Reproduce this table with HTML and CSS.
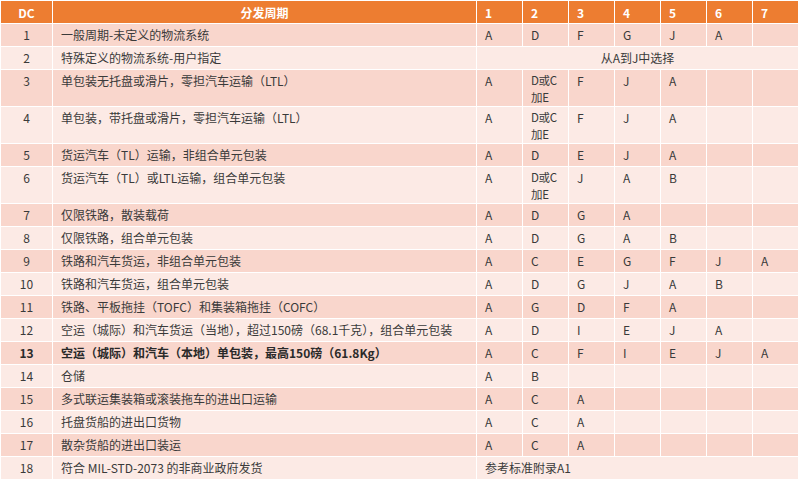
FILE: index.html
```html
<!DOCTYPE html>
<html lang="zh-CN">
<head>
<meta charset="utf-8">
<link rel="stylesheet" href="styles.css">
</head>
<body>
<table class="grid">
  <colgroup>
    <col class="c-dc"><col class="c-desc">
    <col class="c-n"><col class="c-n"><col class="c-n"><col class="c-n"><col class="c-n"><col class="c-n"><col class="c-n">
  </colgroup>
  <thead>
    <tr class="head">
      <th class="ctr">DC</th><th class="ctr">分发周期</th>
      <th>1</th><th>2</th><th>3</th><th>4</th><th>5</th><th>6</th><th>7</th>
    </tr>
  </thead>
  <tbody>
    <tr class="dark"><td class="ctr">1</td><td>一般周期-未定义的物流系统</td><td>A</td><td>D</td><td>F</td><td>G</td><td>J</td><td>A</td><td></td></tr>
    <tr class="light"><td class="ctr">2</td><td>特殊定义的物流系统-用户指定</td><td colspan="7" class="ctr">从A到J中选择</td></tr>
    <tr class="dark tall"><td class="ctr">3</td><td>单包装无托盘或滑片，零担汽车运输（LTL）</td><td>A</td><td class="narrow">D或C<br>加E</td><td>F</td><td>J</td><td>A</td><td></td><td></td></tr>
    <tr class="light tall"><td class="ctr">4</td><td>单包装，带托盘或滑片，零担汽车运输（LTL）</td><td>A</td><td class="narrow">D或C<br>加E</td><td>F</td><td>J</td><td>A</td><td></td><td></td></tr>
    <tr class="dark"><td class="ctr">5</td><td>货运汽车（TL）运输，非组合单元包装</td><td>A</td><td>D</td><td>E</td><td>J</td><td>A</td><td></td><td></td></tr>
    <tr class="light tall"><td class="ctr">6</td><td>货运汽车（TL）或LTL运输，组合单元包装</td><td>A</td><td class="narrow">D或C<br>加E</td><td>J</td><td>A</td><td>B</td><td></td><td></td></tr>
    <tr class="dark"><td class="ctr">7</td><td>仅限铁路，散装载荷</td><td>A</td><td>D</td><td>G</td><td>A</td><td></td><td></td><td></td></tr>
    <tr class="light"><td class="ctr">8</td><td>仅限铁路，组合单元包装</td><td>A</td><td>D</td><td>G</td><td>A</td><td>B</td><td></td><td></td></tr>
    <tr class="dark"><td class="ctr">9</td><td>铁路和汽车货运，非组合单元包装</td><td>A</td><td>C</td><td>E</td><td>G</td><td>F</td><td>J</td><td>A</td></tr>
    <tr class="light"><td class="ctr">10</td><td>铁路和汽车货运，组合单元包装</td><td>A</td><td>D</td><td>G</td><td>J</td><td>A</td><td>B</td><td></td></tr>
    <tr class="dark"><td class="ctr">11</td><td>铁路、平板拖挂（TOFC）和集装箱拖挂（COFC）</td><td>A</td><td>G</td><td>D</td><td>F</td><td>A</td><td></td><td></td></tr>
    <tr class="light"><td class="ctr">12</td><td>空运（城际）和汽车货运（当地），超过150磅（68.1千克），组合单元包装</td><td>A</td><td>D</td><td>I</td><td>E</td><td>J</td><td>A</td><td></td></tr>
    <tr class="dark"><td class="ctr strong">13</td><td class="strong">空运（城际）和汽车（本地）单包装，最高150磅（61.8Kg）</td><td>A</td><td>C</td><td>F</td><td>I</td><td>E</td><td>J</td><td>A</td></tr>
    <tr class="light"><td class="ctr">14</td><td>仓储</td><td>A</td><td>B</td><td></td><td></td><td></td><td></td><td></td></tr>
    <tr class="dark"><td class="ctr">15</td><td>多式联运集装箱或滚装拖车的进出口运输</td><td>A</td><td>C</td><td>A</td><td></td><td></td><td></td><td></td></tr>
    <tr class="light"><td class="ctr">16</td><td>托盘货船的进出口货物</td><td>A</td><td>C</td><td>A</td><td></td><td></td><td></td><td></td></tr>
    <tr class="dark"><td class="ctr">17</td><td>散杂货船的进出口装运</td><td>A</td><td>C</td><td>A</td><td></td><td></td><td></td><td></td></tr>
    <tr class="light"><td class="ctr">18</td><td>符合 MIL-STD-2073 的非商业政府发货</td><td colspan="7">参考标准附录A1</td></tr>
  </tbody>
</table>
</body>
</html>
```

FILE: styles.css
```css
html, body {
  margin: 0;
  padding: 0;
  background: #ffffff;
}

.grid {
  border-collapse: separate;
  border-spacing: 1px;
  table-layout: fixed;
  width: 799px;
  font-family: "Noto Sans CJK SC", "Noto Sans", sans-serif;
  font-size: 12px;
  line-height: 15px;
  color: #3a3a3a;
}

.c-dc { width: 51px; }
.c-desc { width: 423px; }
.c-n { width: 45px; }

.grid th,
.grid td {
  padding: 3px 8px;
  text-align: left;
  vertical-align: top;
  white-space: nowrap;
  overflow: hidden;
}

.grid th {
  height: 22px;
  box-sizing: border-box;
  vertical-align: middle;
  background: #ed7d31;
  color: #ffffff;
  font-weight: bold;
  font-size: 12px;
}

.grid td {
  height: 22px;
  box-sizing: border-box;
}

.grid .tall td {
  height: 36px;
}

.grid .ctr {
  text-align: center;
}

.grid td.narrow {
  padding: 2px 0 0 8px;
  font-size: 11.5px;
  line-height: 16.5px;
  letter-spacing: -0.3px;
}

.dark td { background: #f9d6cc; }
.light td { background: #fceae5; }

.grid td.strong { font-weight: bold; color: #2a2a2a; }
```
